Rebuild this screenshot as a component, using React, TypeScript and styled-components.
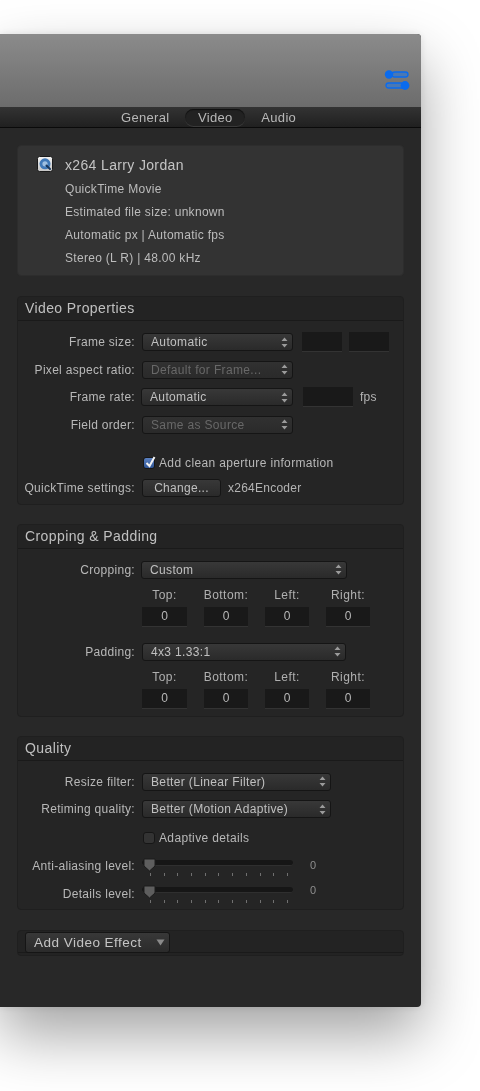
import styled, { createGlobalStyle } from "styled-components"

const Global = createGlobalStyle`
    html, body {
        margin:0;
        height:100%;
        background:#fff;
        overflow:hidden;
    }
    body {
        font-family:"Liberation Sans", Arial, sans-serif;
    }
`
const Page = styled.div`
    padding-top:34px;
    height:1091px;
    box-sizing:border-box;
`
const Win = styled.div`
    width:421px;
    height:973px;
    border-radius:0 4px 4px 0;
    background:#282828;
    box-shadow:0 28px 60px rgba(0,0,0,0.36), 0 0 8px rgba(0,0,0,0.1);
    overflow:hidden;
    filter:blur(0.4px);
`
const TitleArea = styled.div`
    height:73px;
    box-sizing:border-box;
    background:linear-gradient(#8b8b8b, #6c6c6c);
    display:flex;
    justify-content:flex-end;
    align-items:flex-end;
    padding:0 11px 16px 0;
`
const TabBar = styled.div`
    height:21px;
    box-sizing:border-box;
    background:linear-gradient(#333333, #202020);
    border-bottom:1px solid #0a0a0a;
    display:flex;
    align-items:center;
    padding-left:121px;
    gap:16px;
`
const Tab = styled.div<{ $active?: boolean }>`
    height:17px;
    width:${({ $active }) => $active ? '60px' : 'auto'};
    display:flex;
    align-items:center;
    justify-content:center;
    border-radius:9px;
    font-size:13px;
    letter-spacing:0.3px;
    color:#b8b8b8;
    background:${({ $active }) => $active ? '#222222' : 'transparent'};
    box-shadow:${({ $active }) => $active ? 'inset 0 1px 1px #101010, 0 1px 0 #3a3a3a' : 'none'};
`
const Content = styled.div`
    padding:17px 17px 0;
`
const Summary = styled.div`
    height:131px;
    box-sizing:border-box;
    background:#333333;
    border-radius:4px;
    border:1px solid #2d2d2d;
    padding:10px 0 0 19px;
    display:flex;
    gap:12px;
`
const SummaryText = styled.div`
    display:flex;
    flex-direction:column;
`
const SummaryTitle = styled.div`
    height:19px;
    line-height:19px;
    font-size:14px;
    letter-spacing:0.35px;
    color:#c4c4c4;
    margin-bottom:3px;
`
const SummaryLine = styled.div`
    height:23px;
    line-height:23px;
    font-size:12px;
    letter-spacing:0.3px;
    color:#bcbcbc;
`
const Section = styled.div<{ $top: number }>`
    margin-top:${({ $top }) => $top}px;
    background:#252525;
    border:1px solid #1f1f1f;
    border-radius:4px;
`
const SectionHead = styled.div`
    height:24px;
    box-sizing:border-box;
    background:#232323;
    border-bottom:1px solid #1a1a1a;
    padding-left:7px;
    line-height:23px;
    font-size:14px;
    letter-spacing:0.4px;
    color:#c0c0c0;
    border-radius:4px 4px 0 0;
`
const SectionBody = styled.div<{ $bottom: number }>`
    padding:12px 0 ${({ $bottom }) => $bottom}px;
`
const Row = styled.div<{ $top?: number }>`
    height:18px;
    margin-top:${({ $top }) => $top || 0}px;
    display:flex;
    align-items:center;
    gap:7px;
`
const Label = styled.div`
    width:117px;
    flex-shrink:0;
    text-align:right;
    font-size:12px;
    letter-spacing:0.3px;
    color:#b8b8b8;
    white-space:nowrap;
`
const SelectBox = styled.div<{ $width: number, $off?: boolean, $nudge?: boolean }>`
    width:${({ $width }) => $width}px;
    height:18px;
    box-sizing:border-box;
    margin-left:${({ $nudge }) => $nudge ? '-1px' : '0'};
    padding:0 4px 0 8px;
    display:flex;
    align-items:center;
    justify-content:space-between;
    border:1px solid #151515;
    border-radius:3px;
    background:${({ $off }) => $off ? 'linear-gradient(#313131, #2a2a2a)' : 'linear-gradient(#383838, #2a2a2a)'};
    font-size:12px;
    letter-spacing:0.35px;
    color:${({ $off }) => $off ? '#686868' : '#c0c0c0'};
    white-space:nowrap;
`
const Field = styled.div<{ $width: number, $left?: number }>`
    width:${({ $width }) => $width}px;
    height:20px;
    flex-shrink:0;
    box-sizing:border-box;
    margin-left:${({ $left }) => $left || 0}px;
    background:#191919;
    border-bottom:1px solid #333;
    display:flex;
    align-items:center;
    justify-content:center;
    font-size:12px;
    color:#b8b8b8;
`
const PlainText = styled.div`
    font-size:12px;
    letter-spacing:0.25px;
    color:#b4b4b4;
    white-space:nowrap;
`
const CheckRow = styled.div<{ $top: number }>`
    height:12px;
    margin:${({ $top }) => $top}px 0 0 125px;
    display:flex;
    align-items:center;
    gap:4px;
    font-size:12px;
    letter-spacing:0.35px;
    color:#b8b8b8;
`
const CheckBox = styled.div<{ $on?: boolean }>`
    width:12px;
    height:12px;
    position:relative;
    border-radius:3px;
    border:1px solid #161616;
    box-sizing:border-box;
    background:${({ $on }) => $on ? 'linear-gradient(#5a80c0, #2f5596)' : '#333'};
    svg {
        position:absolute;
        left:0;
        top:-3px;
    }
`
const ChangeButton = styled.div`
    width:79px;
    height:18px;
    box-sizing:border-box;
    border:1px solid #151515;
    border-radius:3px;
    background:linear-gradient(#383838, #2a2a2a);
    display:flex;
    align-items:center;
    justify-content:center;
    font-size:12px;
    letter-spacing:0.3px;
    color:#c0c0c0;
`
const FieldGrid = styled.div`
    margin:9px 0 0 124px;
    display:flex;
    gap:17px;
`
const FieldCol = styled.div<{ $width: number }>`
    width:${({ $width }) => $width}px;
    display:flex;
    flex-direction:column;
    align-items:center;
    gap:5px;
`
const FieldCaption = styled.div`
    height:14px;
    line-height:14px;
    font-size:12px;
    letter-spacing:0.45px;
    color:#b0b0b0;
    white-space:nowrap;
`
const SliderRow = styled.div<{ $top: number }>`
    height:20px;
    margin-top:${({ $top }) => $top}px;
    display:flex;
    gap:7px;
`
const SliderLabel = styled(Label)<{ $shift: number }>`
    padding-top:${({ $shift }) => $shift}px;
    line-height:14px;
`
const Slider = styled.div`
    width:151px;
    position:relative;
`
const Track = styled.div`
    margin-top:2px;
    height:6px;
    border-radius:3px;
    background:#161616;
    border-bottom:1px solid #2f2f2f;
    box-sizing:border-box;
`
const Thumb = styled.svg`
    position:absolute;
    left:1px;
    top:0;
`
const Ticks = styled.div`
    margin:7px 5px 0 8px;
    display:flex;
    justify-content:space-between;
`
const Tick = styled.div`
    width:1px;
    height:3px;
    background:#707070;
`
const SliderValue = styled.div<{ $shift: number }>`
    margin:${({ $shift }) => $shift}px 0 0 10px;
    line-height:14px;
    height:14px;
    font-size:11px;
    color:#8e8e8e;
`
const EffectBar = styled.div`
    margin-top:20px;
    height:26px;
    box-sizing:border-box;
    background:#232323;
    border:1px solid #1f1f1f;
    border-radius:4px;
`
const EffectInner = styled.div`
    height:22px;
    padding:1px 0 0 7px;
    box-sizing:border-box;
    border-bottom:1px solid #1a1a1a;
`
const EffectButton = styled.div`
    width:145px;
    height:21px;
    box-sizing:border-box;
    padding:0 4px 0 8px;
    display:flex;
    align-items:center;
    justify-content:space-between;
    border:1px solid #151515;
    border-radius:3px;
    background:linear-gradient(#383838, #2b2b2b);
    font-size:13.5px;
    letter-spacing:0.48px;
    color:#c4c4c4;
`
const QuickTimeIcon = styled.svg`
    flex-shrink:0;
`

const Arrows = () => (
    <svg width="7" height="11" viewBox="0 0 7 11">
        <path d="M3.5 0.5 L6.5 4 H0.5 Z M3.5 10.5 L6.5 7 H0.5 Z" fill="#9a9a9a" />
    </svg>
)

type SelectProps = {
    text: string,
    width: number,
    off?: boolean,
    nudge?: boolean,
}
const Select = ({ text, width, off, nudge }: SelectProps) => (
    <SelectBox $width={width} $off={off} $nudge={nudge}>
        <span>{text}</span>
        <Arrows />
    </SelectBox>
)

const sideIcon = (
    <svg width="26" height="22" viewBox="0 0 26 22">
        <rect x="8" y="3" width="16" height="5" rx="2.5" fill="#4a78b4" stroke="#0a6bee" strokeWidth="1.3" />
        <circle cx="5" cy="5.5" r="4.2" fill="#0a6bee" />
        <rect x="2" y="14" width="18" height="5" rx="2.5" fill="#4a78b4" stroke="#0a6bee" strokeWidth="1.3" />
        <circle cx="21" cy="16.5" r="4.4" fill="#0a6bee" />
    </svg>
)

const quickTimeIcon = (
    <QuickTimeIcon width="16" height="16" viewBox="0 0 16 16">
        <defs>
            <linearGradient id="qtBack" x1="0" y1="0" x2="0" y2="1">
                <stop offset="0" stopColor="#f2f2f2" />
                <stop offset="1" stopColor="#c4c4c4" />
            </linearGradient>
        </defs>
        <rect x="0.5" y="0.5" width="15" height="15" rx="2" fill="url(#qtBack)" stroke="#1a1a1a" />
        <circle cx="8" cy="7.8" r="5.5" fill="#3f78b8" />
        <circle cx="8" cy="7.8" r="2.6" fill="#9dbfe2" />
        <path d="M9.5 9.5 L13 13" stroke="#17365c" strokeWidth="2" strokeLinecap="round" />
    </QuickTimeIcon>
)

const Numbers = () => (
    <FieldGrid>
        <FieldCol $width={45}><FieldCaption>Top:</FieldCaption><Field $width={45}>0</Field></FieldCol>
        <FieldCol $width={44}><FieldCaption>Bottom:</FieldCaption><Field $width={44}>0</Field></FieldCol>
        <FieldCol $width={44}><FieldCaption>Left:</FieldCaption><Field $width={44}>0</Field></FieldCol>
        <FieldCol $width={44}><FieldCaption>Right:</FieldCaption><Field $width={44}>0</Field></FieldCol>
    </FieldGrid>
)

type LevelProps = {
    label: string,
    top: number,
    labelShift: number,
    valueShift: number,
}
const Level = ({ label, top, labelShift, valueShift }: LevelProps) => (
    <SliderRow $top={top}>
        <SliderLabel $shift={labelShift}>{label}</SliderLabel>
        <Slider>
            <Track />
            <Thumb width="13" height="14" viewBox="0 0 13 14">
                <path d="M1 1 H12 V8 L6.5 13 L1 8 Z" fill="#5e5e5e" stroke="#1c1c1c" />
            </Thumb>
            <Ticks>
                {Array.from({ length: 11 }).map((_, i) => <Tick key={i} />)}
            </Ticks>
        </Slider>
        <SliderValue $shift={valueShift}>0</SliderValue>
    </SliderRow>
)

export default function App() {
    return (
        <Page>
            <Global />
            <Win>
                <TitleArea>{sideIcon}</TitleArea>
                <TabBar>
                    <Tab>General</Tab>
                    <Tab $active>Video</Tab>
                    <Tab>Audio</Tab>
                </TabBar>
                <Content>
                    <Summary>
                        {quickTimeIcon}
                        <SummaryText>
                            <SummaryTitle>x264 Larry Jordan</SummaryTitle>
                            <SummaryLine>QuickTime Movie</SummaryLine>
                            <SummaryLine>Estimated file size: unknown</SummaryLine>
                            <SummaryLine>Automatic px | Automatic fps</SummaryLine>
                            <SummaryLine>Stereo (L R) | 48.00 kHz</SummaryLine>
                        </SummaryText>
                    </Summary>

                    <Section $top={20}>
                        <SectionHead>Video Properties</SectionHead>
                        <SectionBody $bottom={7}>
                            <Row>
                                <Label>Frame size:</Label>
                                <Select text="Automatic" width={151} />
                                <Field $width={40} $left={2} />
                                <Field $width={40} />
                            </Row>
                            <Row $top={9.5}>
                                <Label>Pixel aspect ratio:</Label>
                                <Select text="Default for Frame..." width={151} off />
                            </Row>
                            <Row $top={9.5}>
                                <Label>Frame rate:</Label>
                                <Select text="Automatic" width={152} nudge />
                                <Field $width={50} $left={3} />
                                <PlainText>fps</PlainText>
                            </Row>
                            <Row $top={9.5}>
                                <Label>Field order:</Label>
                                <Select text="Same as Source" width={151} off />
                            </Row>
                            <CheckRow $top={23}>
                                <CheckBox $on>
                                    <svg width="14" height="14" viewBox="0 0 14 14">
                                        <path d="M2.5 8 L5.5 11 L10.5 2" fill="none" stroke="#f2f2f2" strokeWidth="2" />
                                    </svg>
                                </CheckBox>
                                Add clean aperture information
                            </CheckRow>
                            <Row $top={10}>
                                <Label>QuickTime settings:</Label>
                                <ChangeButton>Change...</ChangeButton>
                                <PlainText>x264Encoder</PlainText>
                            </Row>
                        </SectionBody>
                    </Section>

                    <Section $top={19}>
                        <SectionHead>Cropping &amp; Padding</SectionHead>
                        <SectionBody $bottom={7}>
                            <Row>
                                <Label>Cropping:</Label>
                                <Select text="Custom" width={206} nudge />
                            </Row>
                            <Numbers />
                            <Row $top={16}>
                                <Label>Padding:</Label>
                                <Select text="4x3 1.33:1" width={204} />
                            </Row>
                            <Numbers />
                        </SectionBody>
                    </Section>

                    <Section $top={19}>
                        <SectionHead>Quality</SectionHead>
                        <SectionBody $bottom={4}>
                            <Row>
                                <Label>Resize filter:</Label>
                                <Select text="Better (Linear Filter)" width={189} />
                            </Row>
                            <Row $top={9.5}>
                                <Label>Retiming quality:</Label>
                                <Select text="Better (Motion Adaptive)" width={189} />
                            </Row>
                            <CheckRow $top={14}>
                                <CheckBox />
                                Adaptive details
                            </CheckRow>
                            <Level label="Anti-aliasing level:" top={14} labelShift={1} valueShift={0} />
                            <Level label="Details level:" top={7} labelShift={2} valueShift={-2} />
                        </SectionBody>
                    </Section>

                    <EffectBar>
                        <EffectInner>
                            <EffectButton>
                                Add Video Effect
                                <svg width="9" height="7" viewBox="0 0 9 7">
                                    <path d="M0.5 0.5 H8.5 L4.5 6.5 Z" fill="#8a8a8a" />
                                </svg>
                            </EffectButton>
                        </EffectInner>
                    </EffectBar>
                </Content>
            </Win>
        </Page>
    )
}
